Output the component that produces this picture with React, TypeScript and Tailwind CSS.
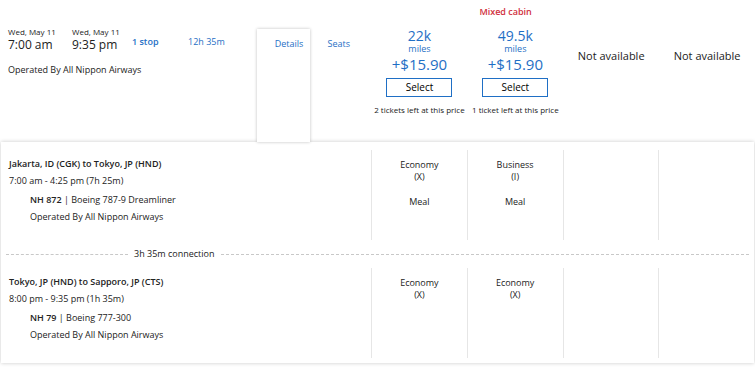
import React from "react";

const blue = "text-[#1f6fc5]";

function PriceCol({ miles, left, tag }: { miles: string; left: string; tag?: string }) {
  return (
    <div className="w-[96px] flex flex-col items-center relative">
      {tag && (
        <div className="absolute top-[6px] left-[12px] text-[9px] font-semibold text-[#d0303c] leading-[12px] whitespace-nowrap">
          {tag}
        </div>
      )}
      <div className={`mt-[28px] text-[14px] leading-[15px] ${blue}`}>{miles}</div>
      <div className={`text-[9px] leading-[12px] ${blue}`}>miles</div>
      <div className={`text-[15px] leading-[18px] ${blue}`}>+$15.90</div>
      <button className="mt-[5px] w-[66px] h-[19px] border border-[#1f6fc5] text-[10px] text-black leading-[17px] bg-white">
        Select
      </button>
      <div className="mt-[7px] text-[8px] leading-[11px] text-[#222] whitespace-nowrap">{left}</div>
    </div>
  );
}

function CabinCol({ cabin, code, meal }: { cabin?: string; code?: string; meal?: string }) {
  return (
    <div className="w-[96px] border-l border-[#e6e6e6] flex flex-col items-center text-[9px] leading-[12px] text-[#222]">
      {cabin && <div className="mt-[9px]">{cabin}</div>}
      {code && <div>{code}</div>}
      {meal && <div className="mt-[13px]">{meal}</div>}
    </div>
  );
}

function Segment({
  route,
  times,
  flight,
  cols,
}: {
  route: string;
  times: string;
  flight: string;
  cols: { cabin?: string; code?: string; meal?: string }[];
}) {
  const [num, plane] = flight.split(" | ");
  return (
    <div className="flex h-[90px]">
      <div className="w-[371px] pl-[8px] text-[9px] text-[#222]">
        <div className="mt-[7px] font-semibold leading-[14px]">{route}</div>
        <div className="mt-[3px] leading-[14px]">{times}</div>
        <div className="mt-[5px] pl-[21px] leading-[14px]">
          <span className="font-semibold">{num}</span> | {plane}
        </div>
        <div className="mt-[3px] pl-[21px] leading-[14px]">Operated By All Nippon Airways</div>
      </div>
      {cols.map((c, i) => (
        <CabinCol key={i} {...c} />
      ))}
    </div>
  );
}

export default function App() {
  return (
    <div
      className="w-[755px] h-[367px] bg-white overflow-hidden text-[#222]"
      style={{ fontFamily: '"Open Sans", "Noto Sans", sans-serif' }}
    >
      <div className="flex h-[142px]">
        <div className="w-[257px] pl-[8px]">
          <div className="flex mt-[26px]">
            <div className="w-[64px]">
              <div className="text-[8px] leading-[11px]">Wed, May 11</div>
              <div className="text-[12px] leading-[16px]">7:00 am</div>
            </div>
            <div className="w-[60px]">
              <div className="text-[8px] leading-[11px]">Wed, May 11</div>
              <div className="text-[12px] leading-[16px]">9:35 pm</div>
            </div>
            <div className={`w-[56px] mt-[10px] text-[9px] leading-[12px] font-semibold ${blue}`}>1 stop</div>
            <div className={`mt-[10px] text-[9px] leading-[12px] ${blue}`}>12h 35m</div>
          </div>
          <div className="mt-[11px] text-[9px] leading-[12px]">Operated By All Nippon Airways</div>
        </div>
        <div className="w-[53px] mt-[29px] bg-white shadow-[0_0_3px_rgba(0,0,0,0.25)] relative z-10">
          <div className={`mt-[9px] pl-[18px] text-[9px] leading-[12px] ${blue}`}>Details</div>
        </div>
        <div className="w-[62px] pt-[38px] pl-[18px]">
          <div className={`text-[9px] leading-[12px] ${blue}`}>Seats</div>
        </div>
        <PriceCol miles="22k" left="2 tickets left at this price" />
        <PriceCol miles="49.5k" left="1 ticket left at this price" tag="Mixed cabin" />
        <div className="w-[96px] pt-[48px] text-center text-[11px] leading-[15px]">Not available</div>
        <div className="w-[96px] pt-[48px] text-center text-[11px] leading-[15px]">Not available</div>
      </div>
      <div className="h-[221px] bg-white shadow-[0_0_4px_rgba(0,0,0,0.22)] mx-[1px] pt-[8px]">
        <Segment
          route="Jakarta, ID (CGK) to Tokyo, JP (HND)"
          times="7:00 am - 4:25 pm (7h 25m)"
          flight="NH 872 | Boeing 787-9 Dreamliner"
          cols={[
            { cabin: "Economy", code: "(X)", meal: "Meal" },
            { cabin: "Business", code: "(I)", meal: "Meal" },
            {},
            {},
          ]}
        />
        <div className="flex items-center h-[28px] px-[5px]">
          <div className="w-[122px] border-t border-dashed border-[#c8c8c8]" />
          <div className="px-[6px] text-[9px] leading-[12px]">3h 35m connection</div>
          <div className="flex-1 border-t border-dashed border-[#c8c8c8]" />
        </div>
        <Segment
          route="Tokyo, JP (HND) to Sapporo, JP (CTS)"
          times="8:00 pm - 9:35 pm (1h 35m)"
          flight="NH 79 | Boeing 777-300"
          cols={[
            { cabin: "Economy", code: "(X)" },
            { cabin: "Economy", code: "(X)" },
            {},
            {},
          ]}
        />
      </div>
    </div>
  );
}
